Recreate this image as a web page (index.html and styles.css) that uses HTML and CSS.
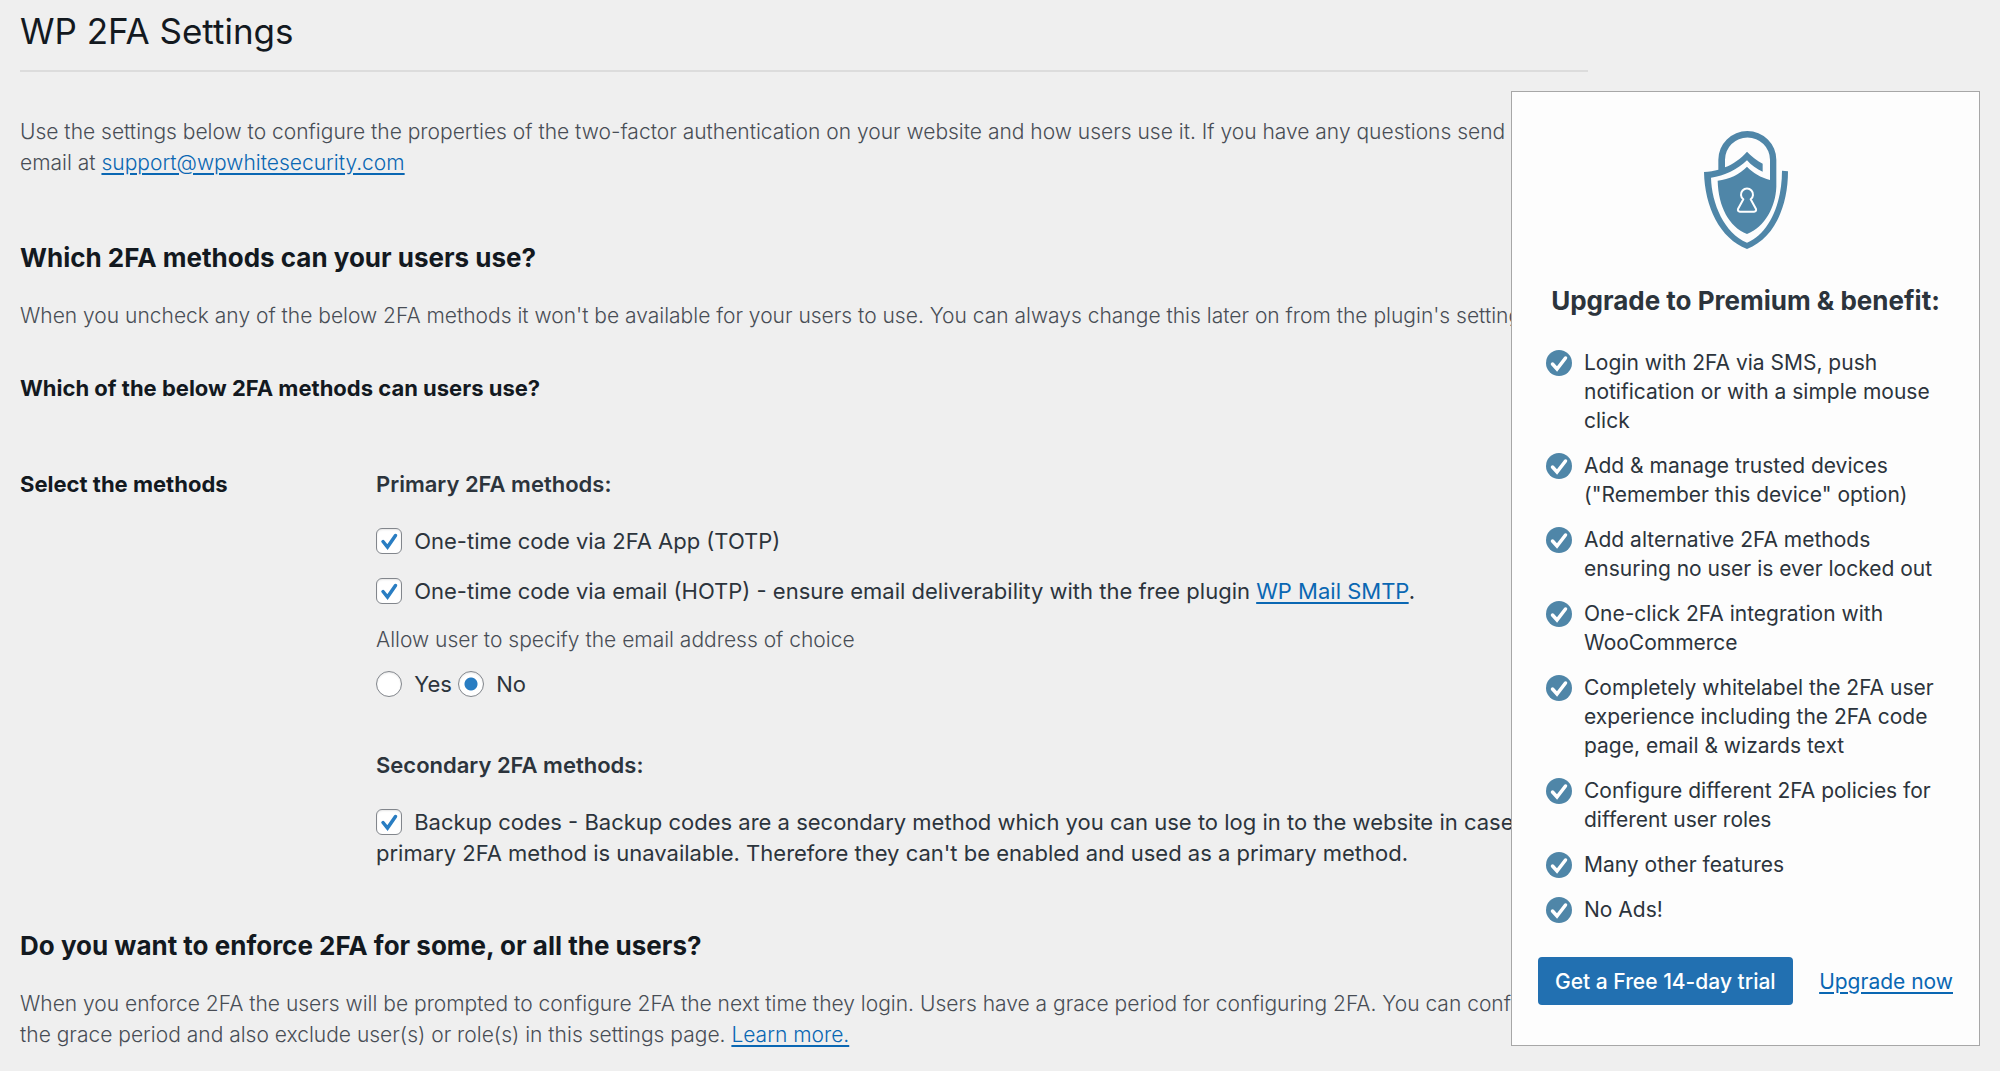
FILE: index.html
```html
<!DOCTYPE html>
<html lang="en">
<head>
  <meta charset="UTF-8" />
  <meta name="viewport" content="width=device-width, initial-scale=1.0"/>
  <title>WP 2FA Settings</title>
  <link rel="stylesheet" href="styles.css">
</head>
<body>
  <main class="wrap">
    <h1>WP 2FA Settings</h1>
    <hr>

    <p class="description intro">Use the settings below to configure the properties of the two-factor authentication on your website and how users use it. If you have any questions send an email at <a href="#">support@wpwhitesecurity.com</a></p>

    <form>
      <h2>Which 2FA methods can your users use?</h2>
      <p class="description">When you uncheck any of the below 2FA methods it won't be available for your users to use. You can always change this later on from the plugin's settings.</p>
      <h3>Which of the below 2FA methods can users use?</h3>

      <div class="form-row">
        <div class="form-label">Select the methods</div>
        <div class="form-fields">
          <h4>Primary 2FA methods:</h4>
          <div class="field">
            <input type="checkbox" id="totp" checked>
            <label for="totp">One-time code via 2FA App (TOTP)</label>
          </div>
          <div class="field">
            <input type="checkbox" id="hotp" checked>
            <label for="hotp">One-time code via email (HOTP) - ensure email deliverability with the free plugin <a href="#">WP Mail SMTP</a>.</label>
          </div>
          <p class="description">Allow user to specify the email address of choice</p>
          <div class="field radios">
            <input type="radio" name="specify-email" id="email-yes">
            <label for="email-yes">Yes</label>
            <input type="radio" name="specify-email" id="email-no" checked>
            <label for="email-no">No</label>
          </div>

          <h4>Secondary 2FA methods:</h4>
          <div class="field">
            <input type="checkbox" id="backup" checked>
            <label for="backup">Backup codes - Backup codes are a secondary method which you can use to log in to the website in case the primary 2FA method is unavailable. Therefore they can't be enabled and used as a primary method.</label>
          </div>
        </div>
      </div>

      <h2>Do you want to enforce 2FA for some, or all the users?</h2>
      <p class="description">When you enforce 2FA the users will be prompted to configure 2FA the next time they login. Users have a grace period for configuring 2FA. You can configure the grace period and also exclude user(s) or role(s) in this settings page. <a href="#">Learn more.</a></p>
    </form>
  </main>

  <aside class="premium">
    <svg class="premium-logo" viewBox="39 33 252 354" aria-hidden="true">
      <path fill="#4f86a8" d="M168 95C180 108 198 122 215 131V155C198 147 180 136 168 121C140 148 100 168 60 173C62 250 100 340 168 368C235 340 273 250 273 152L291 154C291 260 250 355 168 387C86 355 41 260 39 156C55 155 70 152 82 149V119A87 86 0 0 1 256 119V200C254 260 222 320 168 342C114 320 82 260 80 182C115 178 145 163 168 140C185 158 210 173 237 180V119A67 66 0 0 0 102 119V142C125 133 150 116 168 95Z"/>
      <path fill="none" stroke="#fff" stroke-width="6" stroke-linejoin="round" d="M157 238A18 18 0 1 1 179 238L195 267Q197 274 189 275H147Q139 274 141 267Z"/>
    </svg>
    <h3>Upgrade to Premium &amp; benefit:</h3>
    <ul>
      <li>Login with 2FA via SMS, push notification or with a simple mouse click</li>
      <li>Add &amp; manage trusted devices ("Remember this device" option)</li>
      <li>Add alternative 2FA methods ensuring no user is ever locked out</li>
      <li>One-click 2FA integration with WooCommerce</li>
      <li>Completely whitelabel the 2FA user experience including the 2FA code page, email &amp; wizards text</li>
      <li>Configure different 2FA policies for different user roles</li>
      <li>Many other features</li>
      <li>No Ads!</li>
    </ul>
    <div class="premium-actions">
      <button type="button">Get a Free 14-day trial</button>
      <a href="#">Upgrade now</a>
    </div>
  </aside>
</body>
</html>
```
FILE: styles.css
```css
* {
  box-sizing: border-box;
}

body {
  margin: 0;
  font-family: Inter, "Liberation Sans", sans-serif;
  font-size: 22px;
  line-height: 31px;
  color: #2c343c;
  background-color: #efefef;
}

a {
  color: #0a67b3;
  text-decoration-thickness: 2px;
  text-underline-offset: 3px;
}

h1,
h2,
h3,
h4,
p {
  margin: 0;
}

.wrap {
  padding: 8px 412px 0 20px;
}

h1 {
  font-size: 35px;
  font-weight: 400;
  line-height: 46px;
  color: #13191f;
}

hr {
  margin: 16px 0 44px;
  border: 0;
  border-top: 2px solid #dcdcdc;
}

h2 {
  margin-bottom: 27px;
  font-size: 26px;
  font-weight: 700;
  color: #13191f;
}

.wrap h3 {
  font-size: 22px;
  font-weight: 700;
  color: #13191f;
}

.description {
  font-size: 21px;
  font-weight: 300;
  color: #484d55;
}

.intro {
  margin-bottom: 64px;
}

form > h3 {
  margin-top: 42px;
}

/* method rows */
.form-row {
  display: flex;
  margin: 65px 0 42px;
}

.form-label {
  flex: 0 0 356px;
  font-weight: 700;
  color: #13191f;
}

.form-fields {
  flex: 1;
}

.form-fields .description {
  line-height: 27px;
}

h4 {
  margin-bottom: 26px;
  font-size: 22px;
  font-weight: 600;
}

.field {
  margin-bottom: 19px;
}

.field.radios {
  margin: 16px 0 50px;
}

input[type="checkbox"],
input[type="radio"] {
  appearance: none;
  width: 26px;
  height: 26px;
  margin: 0 6px 0 0;
  border: 1px solid #82868c;
  border-radius: 6px;
  background-color: #fff;
  box-shadow: inset 0 1px 2px rgba(0, 0, 0, 0.1);
  vertical-align: -5px;
}

input[type="checkbox"]:checked {
  background-image: url("data:image/svg+xml,%3Csvg xmlns='http://www.w3.org/2000/svg' viewBox='0 0 24 24'%3E%3Cpath d='M6 12.500 10.500 18 18.500 6.500' fill='none' stroke='%23297dc2' stroke-width='3.500' stroke-linecap='round'/%3E%3C/svg%3E");
}

input[type="radio"] {
  border-radius: 50%;
}

input[type="radio"]:checked {
  background-image: radial-gradient(circle, #297dc2 6px, transparent 7px);
}

/* upgrade box, floats over the settings */
.premium {
  position: absolute;
  top: 91px;
  right: 20px;
  width: 469px;
  padding: 39px 26px 40px;
  border: 1px solid #a7a7a7;
  background-color: #fdfdfd;
}

.premium-logo {
  display: block;
  width: 84px;
  height: 118px;
  margin: 0 auto 36px;
}

.premium h3 {
  margin-bottom: 32px;
  font-size: 26px;
  font-weight: 700;
  text-align: center;
}

.premium ul {
  margin: 0 0 33px;
  padding: 0 8px;
  list-style: none;
  font-size: 21px;
  line-height: 29px;
}

.premium li {
  margin-bottom: 16px;
  padding-left: 38px;
  background: url("data:image/svg+xml,%3Csvg xmlns='http://www.w3.org/2000/svg' viewBox='0 0 26 26'%3E%3Ccircle cx='13' cy='13' r='13' fill='%234f86a8'/%3E%3Cpath d='M6.500 14 11 19 19.500 8' fill='none' stroke='%23fff' stroke-width='3.500' stroke-linecap='round'/%3E%3C/svg%3E") no-repeat 0 2px / 26px 26px;
}

.premium-actions {
  display: flex;
  justify-content: space-between;
  align-items: center;
  font-size: 21px;
}

.premium-actions button {
  height: 48px;
  padding: 0 17px;
  border: 0;
  border-radius: 4px;
  font: inherit;
  font-weight: 500;
  color: #fff;
  background-color: #2270b1;
  cursor: pointer;
}
```
